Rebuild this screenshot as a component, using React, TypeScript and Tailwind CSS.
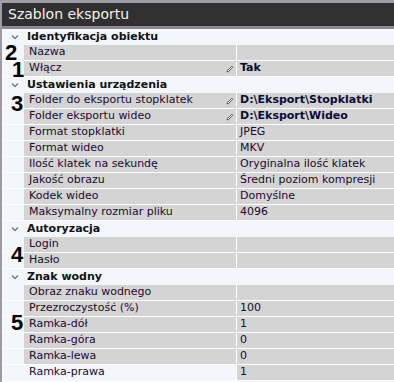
import React from "react";

type Row =
  | { kind: "group"; title: string }
  | { kind: "prop"; name: string; value?: string; bold?: boolean; edit?: boolean; light?: boolean; mark?: string };

const rows: Row[] = [
  { kind: "group", title: "Identyfikacja obiektu" },
  { kind: "prop", name: "Nazwa", mark: "2" },
  { kind: "prop", name: "Włącz", value: "Tak", bold: true, edit: true, mark: "1" },
  { kind: "group", title: "Ustawienia urządzenia" },
  { kind: "prop", name: "Folder do eksportu stopklatek", value: "D:\\Eksport\\Stopklatki", bold: true, edit: true, mark: "3" },
  { kind: "prop", name: "Folder eksportu wideo", value: "D:\\Eksport\\Wideo", bold: true, edit: true },
  { kind: "prop", name: "Format stopklatki", value: "JPEG" },
  { kind: "prop", name: "Format wideo", value: "MKV" },
  { kind: "prop", name: "Ilość klatek na sekundę", value: "Oryginalna ilość klatek" },
  { kind: "prop", name: "Jakość obrazu", value: "Średni poziom kompresji" },
  { kind: "prop", name: "Kodek wideo", value: "Domyślne" },
  { kind: "prop", name: "Maksymalny rozmiar pliku", value: "4096" },
  { kind: "group", title: "Autoryzacja" },
  { kind: "prop", name: "Login", mark: "4" },
  { kind: "prop", name: "Hasło" },
  { kind: "group", title: "Znak wodny" },
  { kind: "prop", name: "Obraz znaku wodnego" },
  { kind: "prop", name: "Przezroczystość (%)", value: "100" },
  { kind: "prop", name: "Ramka-dół", value: "1", mark: "5" },
  { kind: "prop", name: "Ramka-góra", value: "0" },
  { kind: "prop", name: "Ramka-lewa", value: "0" },
  { kind: "prop", name: "Ramka-prawa", value: "1", light: true },
];

// offsets of the big annotation numbers, relative to their row
const markPos: Record<string, string> = {
  "2": "left-[3px] top-[0px]",
  "1": "left-[10px] top-[1px]",
  "3": "left-[9px] top-[3px]",
  "4": "left-[9px] top-[10px]",
  "5": "left-[9px] top-[-2px]",
};

function Pencil() {
  return (
    <svg width="8" height="8" viewBox="0 0 8 8" className="shrink-0">
      <path d="M1 7 L1.6 5.4 L5.8 1.2 L6.8 2.2 L2.6 6.4 Z" fill="#fff" stroke="#333" strokeWidth="0.8" />
    </svg>
  );
}

function Chevron() {
  return (
    <svg width="8" height="6" viewBox="0 0 8 6">
      <path d="M1 1.5 L4 4.5 L7 1.5" fill="none" stroke="#777" strokeWidth="1.4" />
    </svg>
  );
}

export default function App() {
  return (
    <div
      className="w-[394px] h-[382px] overflow-hidden bg-[#f3f6fb] border-l-2 border-[#9f9aa6] text-[11px] text-[#1c0a30]"
      style={{ fontFamily: "'DejaVu Sans', Tahoma, sans-serif" }}
    >
      <div className="border-t-[3px] border-b-[3px] border-t-[#a29ca8] border-b-[#8d8994] bg-[#303030] h-[29px] flex items-center pl-[6px] text-[#f2f2f2] text-[14px]">
        Szablon eksportu
      </div>
      <div className="flex flex-col">
        {rows.map((r, i) =>
          r.kind === "group" ? (
            <div key={i} className="h-[16px] flex items-center bg-[#f3f6fb]">
              <div className="w-[25px] flex justify-center pl-[1px]">
                <Chevron />
              </div>
              <span className="font-bold text-[#111]">{r.title}</span>
            </div>
          ) : (
            <div key={i} className="relative h-[16px] flex border-b border-white">
              <div className="w-[22px] shrink-0 bg-[#f3f6fb]" />
              <div
                className={`w-[212px] shrink-0 flex items-center justify-between pl-[5px] pr-[2px] ${
                  r.light ? "bg-[#f3f6fb]" : "bg-[#d4d4d4]"
                }`}
              >
                <span className="whitespace-nowrap">{r.name}</span>
                {r.edit && <Pencil />}
              </div>
              <div className="w-px bg-white shrink-0" />
              <div className={`flex-1 bg-[#d4d4d4] flex items-center pl-[3px] whitespace-nowrap ${r.bold ? "font-bold text-[#0a0a30]" : ""}`}>
                {r.value}
              </div>
              {r.mark && (
                <span
                  className={`absolute z-10 ${markPos[r.mark]} text-[22px] leading-[16px] font-black text-black`}
                  style={{ fontFamily: "'Liberation Sans', Arial, sans-serif" }}
                >
                  {r.mark}
                </span>
              )}
            </div>
          )
        )}
      </div>
    </div>
  );
}
